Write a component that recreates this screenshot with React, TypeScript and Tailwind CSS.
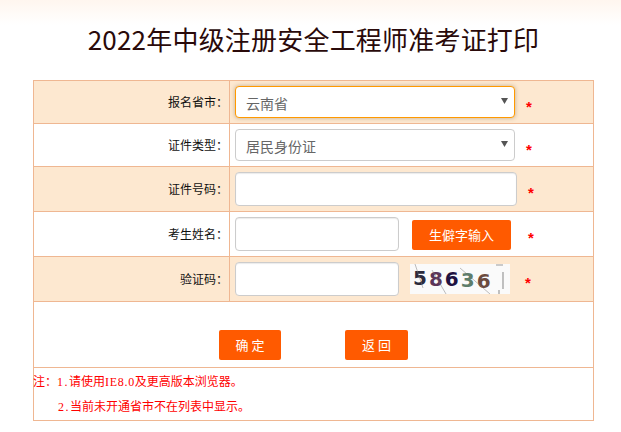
const font = "font-['Noto_Sans_CJK_SC','Liberation_Sans',sans-serif]";

function Star({ className = "" }: { className?: string }) {
  return <span className={`text-[15px] leading-none font-bold text-[#f00] font-['Liberation_Sans',sans-serif] ${className}`}>*</span>;
}

function Row({ label, tint, height, children }: { label: string; tint?: boolean; height: string; children: React.ReactNode }) {
  return (
    <div className={`flex ${height} border-b border-[#efb792] ${tint ? "bg-[#fde8d0]" : "bg-white"}`}>
      <div className="w-[196px] pr-[1px] flex items-center justify-end text-[12px] text-[#111] border-r border-[#efb792]">
        {label}
      </div>
      <div className="flex-1 flex items-center pl-[5px]">{children}</div>
    </div>
  );
}

function FakeSelect({ value, focus }: { value: string; focus?: boolean }) {
  return (
    <div
      className={`w-[280px] h-[32px] rounded-[4px] bg-white border flex items-center justify-between pl-[10px] pr-[6px] text-[14px] text-[#666] ${
        focus ? "border-[#f90] shadow-[0_0_4px_rgba(120,100,60,0.45)]" : "border-[#ccc]"
      }`}
    >
      <span className="pt-[2px]">{value}</span>
      <svg width="7" height="6" viewBox="0 0 7 6" className="mb-[3px]">
        <path d="M0 0h7L3.5 6z" fill="#555" />
      </svg>
    </div>
  );
}

function Field({ className }: { className: string }) {
  return <div className={`h-[34px] rounded-[4px] bg-white border border-[#ccc] shadow-[inset_0_1px_1px_rgba(0,0,0,0.08)] ${className}`} />;
}

function Captcha() {
  const digits = [
    ["5", "#2b2b3d", "-mt-[3px]"],
    ["8", "#5c3558", "mt-0"],
    ["6", "#1f1240", "mt-0"],
    ["3", "#5d7d6a", "mt-[1px]"],
    ["6", "#6b4a3e", "mt-[3px]"],
  ];
  return (
    <div className="relative w-[100px] h-[30px] bg-[#fafafa] flex items-center pl-[3px] gap-[2px] overflow-hidden">
      {digits.map(([d, c, m], i) => (
        <span key={i} style={{ color: c }} className={`text-[20px] leading-none font-bold font-['DejaVu_Sans',sans-serif] ${m}`}>
          {d}
        </span>
      ))}
      <svg className="absolute inset-0" width="100" height="30" viewBox="0 0 100 30" fill="none">
        <path d="M5 0l8 24M22 6l14 24M50 4l30 26" stroke="#777" strokeWidth="0.8" opacity="0.6" />
        <path d="M93 8v17M86 1h7M89 26v4" stroke="#999" strokeWidth="1.2" />
      </svg>
    </div>
  );
}

function Btn({ children, className }: { children: React.ReactNode; className: string }) {
  return (
    <button className={`h-[30px] rounded-[2px] bg-[#ff5a00] text-white text-[13px] ${className}`}>{children}</button>
  );
}

export default function App() {
  return (
    <div className={`w-[621px] h-[432px] overflow-hidden bg-gradient-to-b from-[#fff6ef] to-white to-[25px] ${font}`}>
      <h1 className="pt-[19px] pl-[6px] h-[80px] text-center text-[26px] tracking-[0.2px] leading-[40px] text-[#2a0a0a] font-normal">
        2022年中级注册安全工程师准考证打印
      </h1>
      <div className="ml-[33px] w-[561px] border border-b-0 border-[#efb792]">
        <Row label="报名省市：" tint height="h-[43px]">
          <FakeSelect value="云南省" focus />
          <Star className="ml-[11px] mt-[8px]" />
        </Row>
        <Row label="证件类型：" height="h-[43px]">
          <FakeSelect value="居民身份证" />
          <Star className="ml-[11px] mt-[8px]" />
        </Row>
        <Row label="证件号码：" tint height="h-[45px]">
          <Field className="w-[282px]" />
          <Star className="ml-[11px] mt-[6px]" />
        </Row>
        <Row label="考生姓名：" height="h-[45px]">
          <Field className="w-[164px]" />
          <Btn className="ml-[13px] mt-[1px] w-[99px]">生僻字输入</Btn>
          <Star className="ml-[17px] mt-[6px]" />
        </Row>
        <Row label="验证码：" tint height="h-[45px]">
          <Field className="w-[164px]" />
          <div className="ml-[11px]">
            <Captcha />
          </div>
          <Star className="ml-[15px] mt-[6px]" />
        </Row>
        <div className="h-[66px] border-b border-[#efb792] flex items-end pb-[7px] pl-[185px]">
          <Btn className="w-[62px]">确 定</Btn>
          <Btn className="ml-[64px] w-[63px]">返 回</Btn>
        </div>
        <div className="h-[53px] border-b border-[#efb792] pt-[2px] text-[12px] leading-[25px] text-[#f00] font-['Liberation_Serif','Noto_Sans_CJK_SC',serif]">
          <div className="-ml-[1px]">
            注：<span className="tracking-[1.5px]">1.</span>请使用<span className="tracking-[0.7px]">IE8.0</span>及更高版本浏览器。
          </div>
          <div className="pl-[24px]">
            <span className="tracking-[1.5px]">2.</span>当前未开通省市不在列表中显示。
          </div>
        </div>
      </div>
    </div>
  );
}
